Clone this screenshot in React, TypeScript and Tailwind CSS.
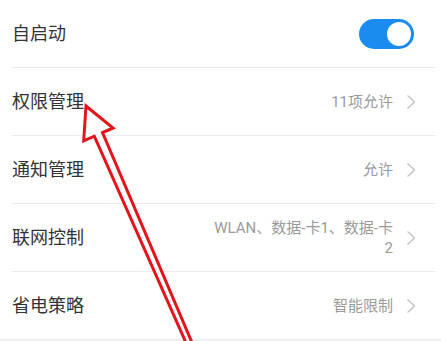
import React from 'react';

const font = { fontFamily: 'Roboto, "Noto Sans CJK SC", sans-serif' };

function Chevron() {
    return (
        <svg className="w-[10px] h-[16px] shrink-0" viewBox="0 0 10 16" fill="none">
            <polyline points="1.5,1.5 8.5,8 1.5,14.5" stroke="#c2c2c2" strokeWidth={1.3} strokeLinejoin="round" />
        </svg>
    );
}

interface RowProps {
    title: string;
    value?: React.ReactNode;
    children?: React.ReactNode;
}

function Row({ title, value, children }: RowProps) {
    return (
        <div className="flex items-center h-[67px] pl-3 pr-[25px]">
            <span className="text-[18px] text-[#333333] grow">{title}</span>
            {children}
            {value && (
                <div className="flex items-center gap-[13px]">
                    <div className="text-[15px] leading-[20px] text-[#9a9a9a] text-right">{value}</div>
                    <Chevron />
                </div>
            )}
        </div>
    );
}

function Divider() {
    return <div className="h-px bg-[#ececec] ml-3 mr-[6px]" />;
}

export default function App() {
    return (
        <div className="relative w-[441px] h-[341px] overflow-hidden bg-white" style={font}>
            <Row title="自启动">
                <div className="w-[55px] h-[30px] rounded-full bg-[#1a8cf0] flex items-center justify-end pr-[3px] mr-[2px]">
                    <div className="w-[24px] h-[24px] rounded-full bg-white" />
                </div>
            </Row>
            <Divider />
            <Row title="权限管理" value="11项允许" />
            <Divider />
            <Row title="通知管理" value="允许" />
            <Divider />
            <Row
                title="联网控制"
                value={
                    <div className="w-[190px]">
                        WLAN、数据-卡1、数据-卡
                        <br />2
                    </div>
                }
            />
            <Divider />
            <Row title="省电策略" value="智能限制" />
            <div className="h-[10px] bg-[#f2f2f2] border-t border-[#ececec]" />

            {/* annotation arrow */}
            <svg className="absolute inset-0 pointer-events-none" width="441" height="341" viewBox="0 0 441 341">
                <polygon
                    points="86,106 113.1,128 102.5,132.6 196,352 191,354 94.3,136.2 83.7,140.8"
                    fill="white"
                    stroke="#e3141b"
                    strokeWidth={3}
                    strokeLinejoin="miter"
                />
            </svg>
        </div>
    );
}
